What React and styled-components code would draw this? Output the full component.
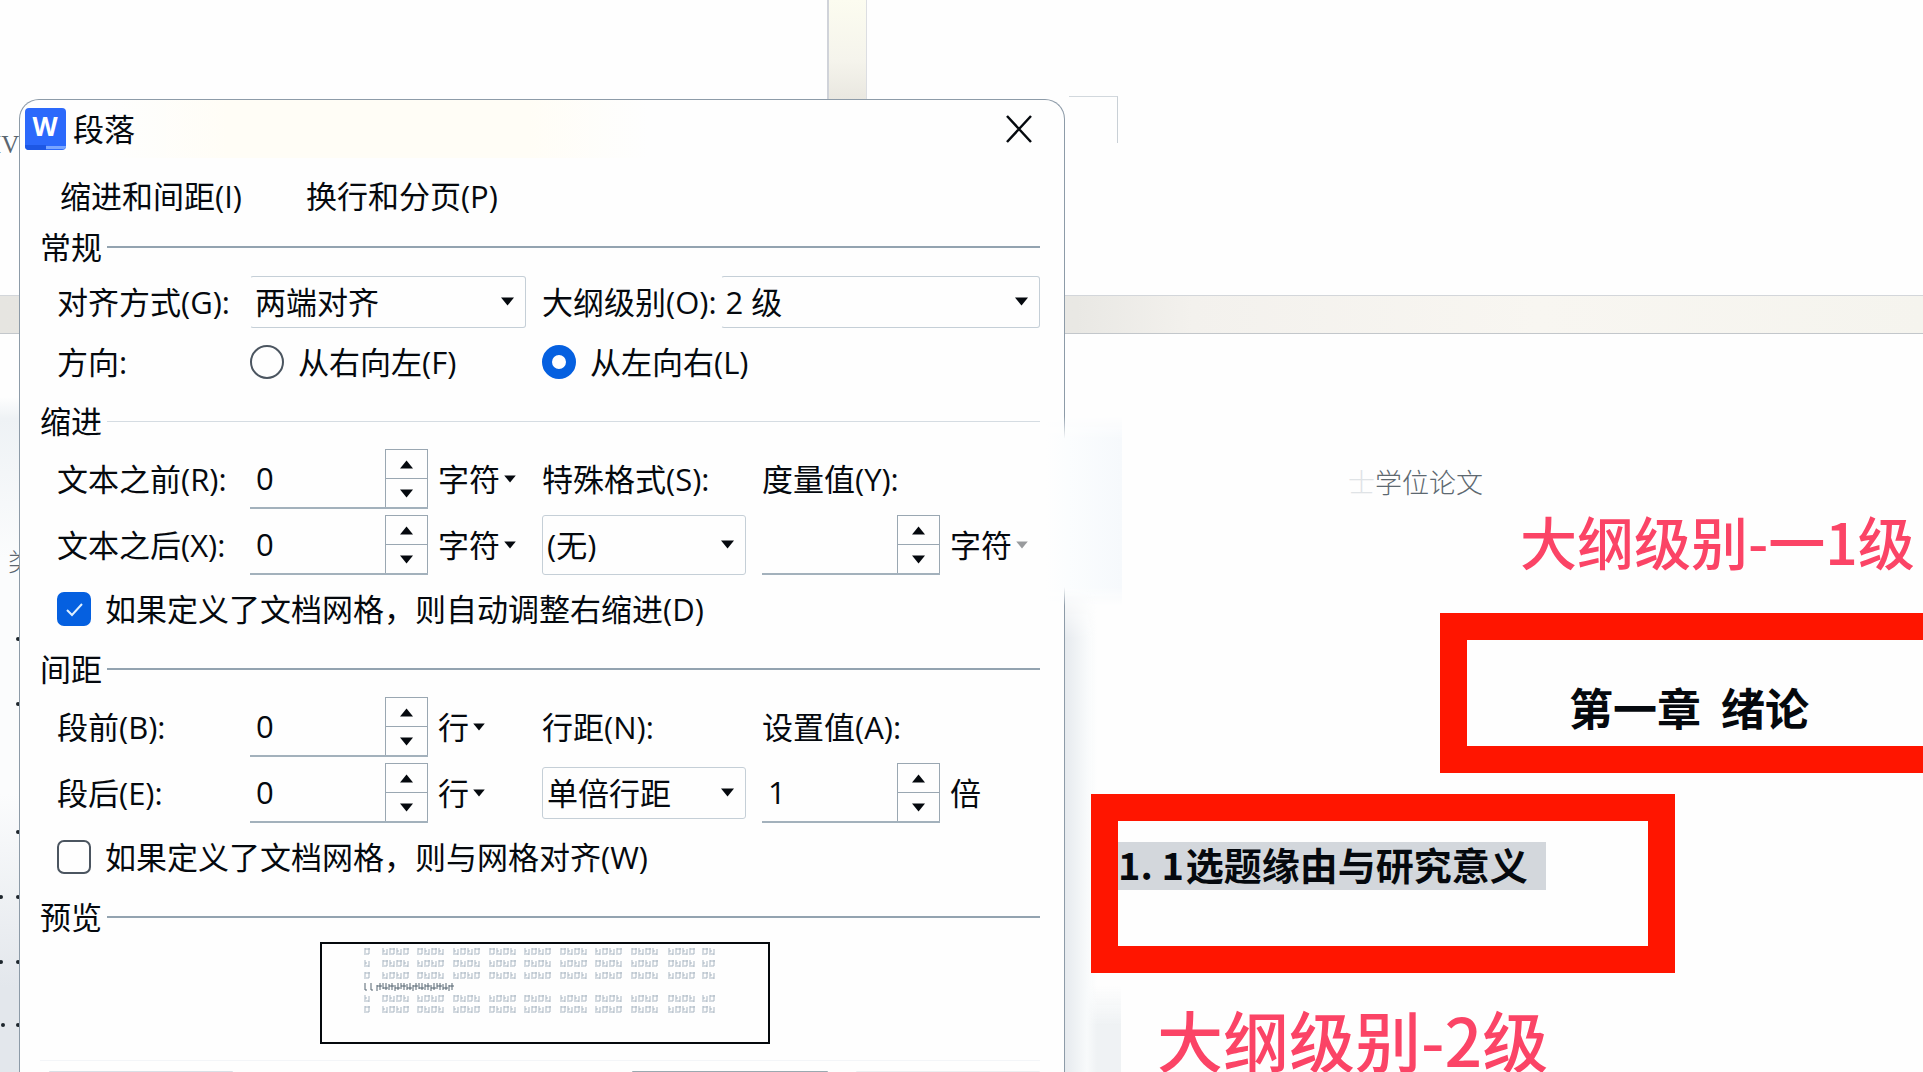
import React, { useState } from 'react';
import styled, { createGlobalStyle } from 'styled-components';

const GlobalStyle = createGlobalStyle`
    * {
        box-sizing: border-box;
    }
    body {
        margin: 0;
        overflow: hidden;
        background: #fefefe;
        color: #05090e;
        font-family: 'Open Sans', 'Noto Sans CJK SC', sans-serif;
        font-size: 31px;
        line-height: 40px;
    }
    button, input, select {
        margin: 0;
        padding: 0;
        border: 0;
        background: none;
        color: inherit;
        font: inherit;
    }
`;

const Workspace = styled.main`
    position: relative;
    display: grid;
    grid-template-columns: 19px 1046fr 858fr;
    height: 100vh;
    overflow: hidden;
`;

const PageGapRow = styled.div`
    position: absolute;
    top: 295px;
    left: 0;
    right: 0;
    height: 39px;
    border-top: 1px solid #d3d6da;
    border-bottom: 1px solid #c3c7cb;
    background: linear-gradient(90deg, #e6e5e1 0, #e9e8e4 56%, #f3f1ed 62%, #f8f6f1 80%, #f5f4ee 100%);
`;

const PageGapColumn = styled.div`
    position: absolute;
    top: 0;
    left: 43%;
    width: 40px;
    height: 100px;
    border-left: 2px solid #d0d3d9;
    border-right: 1px solid #dcdee2;
    background: linear-gradient(#fcfcf0, #f5f4ec 60%, #e9e7e0);
`;

/* left page, mostly behind the dialog */
const Gutter = styled.aside`
    position: relative;
    overflow: hidden;
    background: linear-gradient(transparent 37%, #eef2f5 39%, #fbfcfd 52%, #fbfcfd 74%, #e3e7ec 92%);
`;

const GutterText = styled.span`
    position: absolute;
    top: ${(props) => props.top};
    left: ${(props) => props.left};
    font-family: 'Liberation Serif', 'Noto Sans CJK SC', serif;
    font-size: 25px;
    font-weight: 300;
    color: #5b6670;
    white-space: nowrap;
`;

const LeaderDots = styled.svg`
    position: absolute;
    top: 620px;
    left: 0;
    width: 19px;
    height: 420px;
`;

const Dialog = styled.section`
    position: relative;
    margin-top: 99px;
    padding: 0 24px 0 20px;
    border: 1px solid #8d9ba8;
    border-bottom: 0;
    border-radius: 20px 20px 0 0;
    background: #fefefe;
`;

const EdgeFade = styled.div`
    position: absolute;
    top: 316px;
    right: -58px;
    width: 76px;
    height: 190px;
    background: linear-gradient(90deg, #fefefe, #fbfdfe 30%, #f6f9fc);
    mask-image: linear-gradient(transparent, #000 12%, #000 90%, transparent);
`;

const TitleBar = styled.header`
    display: flex;
    align-items: center;
    height: 58px;
    margin: 0 8px 2px -15px;
    background: linear-gradient(90deg, transparent 8%, #fffdf6 20%, #fffdf6 50%, transparent 62%);
`;

const Title = styled.h1`
    flex: 1;
    margin: 0 0 0 7px;
    font-size: 31px;
    font-weight: 400;
`;

const CloseButton = styled.button`
    display: flex;
    width: 26px;
    height: 28px;
`;

const TabList = styled.div`
    display: flex;
    align-items: center;
    gap: 64px;
    height: 72px;
    padding-left: 20px;
`;

const Group = styled.section`
    padding-bottom: 14px;
`;

const GroupTitle = styled.h2`
    display: flex;
    align-items: center;
    gap: 5px;
    height: 30px;
    margin: 0 0 10px;
    font-size: 31px;
    font-weight: 400;

    &::after {
        content: '';
        flex: 1;
        height: ${(props) => (props.$faint ? '1px' : '2px')};
        background: ${(props) => (props.$faint ? '#d5dce2' : '#93a3b0')};
    }
`;

const Row = styled.div`
    display: grid;
    grid-template-columns: 193px 292px 220px 1fr;
    align-items: center;
    height: ${(props) => props.$height || '66px'};
    padding-left: 17px;
    white-space: nowrap;
`;

const Wide = styled.div`
    grid-column: 3 / 5;
    display: flex;
    align-items: center;
    gap: 4px;
`;

const SelectBox = styled.div`
    position: relative;
    flex: 1;
    width: ${(props) => props.$width || 'auto'};
    height: ${(props) => props.$height || '52px'};
    border: 1px solid #c5cfd7;
    border-left-color: ${(props) => (props.$open ? 'transparent' : '#c5cfd7')};
    border-radius: 3px;

    select {
        width: 100%;
        height: 100%;
        padding-left: 4px;
        appearance: none;
    }
    svg {
        position: absolute;
        top: 50%;
        right: 11px;
        margin-top: -5px;
        pointer-events: none;
    }
`;

const SpinnerCell = styled.div`
    display: flex;
    align-items: center;
    gap: 10px;
`;

const SpinnerBox = styled.div`
    display: flex;
    width: 178px;
    height: 60px;
    border-bottom: 2px solid #a3b1bc;

    input {
        flex: 1;
        min-width: 0;
        padding-left: 6px;
    }
`;

const Steps = styled.div`
    display: flex;
    flex-direction: column;
    width: 43px;
    border: 1px solid #9aa7b2;
    border-bottom: 0;

    button {
        flex: 1;
        display: flex;
        align-items: center;
        justify-content: center;
    }
    button + button {
        border-top: 1px solid #9aa7b2;
    }
`;

const UnitButton = styled.button`
    display: flex;
    align-items: center;
    gap: 4px;

    svg {
        opacity: ${(props) => (props.$faded ? 0.4 : 1)};
    }
`;

const Choice = styled.label`
    display: flex;
    align-items: center;
    gap: 14px;

    input {
        appearance: none;
        flex: none;
        width: 34px;
        height: 34px;
        border: 2px solid #4b5560;
        border-radius: ${(props) => (props.$round ? '50%' : '7px')};
    }
    input[type='radio']:checked {
        border: 10px solid #0560e0;
    }
    input[type='checkbox']:checked {
        border-color: #0560e0;
        background: #0560e0;
    }
`;

const CheckWrap = styled.span`
    position: relative;
    display: flex;

    svg {
        position: absolute;
        top: 10px;
        left: 9px;
        pointer-events: none;
    }
`;

const Preview = styled.div`
    width: 45%;
    height: 102px;
    margin-left: 28%;
    border: 2px solid #05090d;
`;

const Footer = styled.footer`
    display: flex;
    gap: 28px;
    margin-top: 16px;
    padding: 10px 0 0 9px;
    border-top: 1px solid #f3f5f8;
`;

const FooterEdge = styled.div`
    width: ${(props) => props.width};
    height: 2px;
    border-radius: 2px;
    background: ${(props) => props.color};

    &:first-child {
        margin-right: auto;
    }
`;

const Document = styled.article`
    position: relative;
    display: flex;
    flex-direction: column;
    align-items: flex-start;
`;

const DialogShadow = styled.div`
    position: absolute;
    top: 590px;
    left: 0;
    bottom: 0;
    width: 56px;
    background: linear-gradient(90deg, #e6eaee, #f8fafb 22px, transparent 32px),
        linear-gradient(transparent 82%, #eff2f4 90%);
    mask-image: linear-gradient(transparent, #000 10%);
`;

const PageCorner = styled.div`
    width: 49px;
    height: 47px;
    margin: 96px 0 0 4px;
    border-top: 1px solid #d2d8dd;
    border-right: 1px solid #c9d0d6;
`;

const RunningHead = styled.p`
    margin: 319px 0 0 283px;
    font-family: 'Noto Sans CJK SC', sans-serif;
    font-size: 27px;
    font-weight: 300;
    color: #5d6870;

    span {
        color: #dfe3e6;
    }
`;

const Note = styled.p`
    position: relative;
    margin: ${(props) => props.$margin};
    font-family: 'Noto Sans CJK SC', sans-serif;
    font-size: ${(props) => props.$size};
    font-weight: 500;
    line-height: 70px;
    white-space: nowrap;
    color: #fb4466;
`;

const RedFrame = styled.div`
    position: relative;
    display: flex;
    align-items: ${(props) => (props.$chapter ? 'center' : 'flex-start')};
    align-self: ${(props) => (props.$chapter ? 'stretch' : 'flex-start')};
    width: ${(props) => (props.$chapter ? 'auto' : '584px')};
    height: ${(props) => (props.$chapter ? '160px' : '179px')};
    margin: ${(props) => props.$margin};
    padding: ${(props) => (props.$chapter ? '28px 0 0 102px' : '21px 0 0')};
    border: 27px solid #ff1500;
    border-right-width: ${(props) => (props.$chapter ? 0 : '27px')};
    background: #fefefe;
    font-family: 'Noto Sans CJK SC', sans-serif;
    white-space: nowrap;
`;

const Chapter = styled.h2`
    display: flex;
    gap: 20px;
    margin: 0;
    font-size: 44px;
    font-weight: 700;
`;

const Heading = styled.h3`
    display: flex;
    gap: 2px;
    margin: 0;
    padding: 0 18px 4px 0;
    font-size: 38px;
    font-weight: 700;
    line-height: 44px;
    background: #d3d7dc;
`;

const Caret = ({ up, small }) => (
    <svg width={small ? 12 : 13} height={small ? 8 : 9} viewBox="0 0 13 9" fill="currentColor" aria-hidden="true">
        <path d={up ? 'M6.5 0.5 13 8.5H0z' : 'M0 0.5h13L6.5 8.5z'} />
    </svg>
);

const AppIcon = () => (
    <svg width="41" height="42" viewBox="0 0 41 42" overflow="visible" aria-hidden="true">
        <rect width="41" height="42" rx="4" fill="#2c69fb" />
        <path d="M0 37h21v5H4a4 4 0 0 1-4-4z" fill="#1d57e4" />
        <path d="M21 38h20a3 3 0 0 1-2 3H21z" fill="#79a5ff" />
        <text x="20" y="28" textAnchor="middle" fontFamily="Open Sans" fontSize="26" fontWeight="700" fill="#fff">W</text>
    </svg>
);

const Select = ({ id, options, width, height, open }) => (
    <SelectBox $width={width} $height={height} $open={open}>
        <select id={id}>
            {options.map((option) => <option key={option}>{option}</option>)}
        </select>
        <Caret />
    </SelectBox>
);

const Spinner = ({ id, initial, unit, plain, faded }) => {
    const [value, setValue] = useState(initial);
    const step = (amount) => setValue(String(Math.max(0, Number(value) + amount)));

    return (
        <SpinnerCell>
            <SpinnerBox>
                <input id={id} value={value} onChange={(e) => setValue(e.target.value)} />
                <Steps>
                    <button type="button" aria-label="增加" onClick={() => step(1)}><Caret up /></button>
                    <button type="button" aria-label="减少" onClick={() => step(-1)}><Caret /></button>
                </Steps>
            </SpinnerBox>
            {plain ? <span>{unit}</span> : (
                <UnitButton type="button" $faded={faded}>{unit}<Caret small /></UnitButton>
            )}
        </SpinnerCell>
    );
};

const Check = ({ label, initial }) => {
    const [checked, setChecked] = useState(initial);
    return (
        <Choice>
            <CheckWrap>
                <input type="checkbox" checked={checked} onChange={() => setChecked(!checked)} />
                {checked && (
                    <svg width="17" height="15" viewBox="0 0 17 15" fill="none" stroke="#dff0ff" strokeWidth="2">
                        <path d="M1 8l5 5L16 2" />
                    </svg>
                )}
            </CheckWrap>
            {label}
        </Choice>
    );
};

const groupStarts = [0, 18, 53, 89, 125, 160, 196, 231, 267, 304, 338];

// thumbnail of the paragraph among its neighbours
const PreviewLines = () => {
    const marks = [];
    [4, 16, 28, 51, 62].forEach((y, line) => {
        groupStarts.forEach((start, group) => {
            const count = group === 0 ? 1 : group === 10 ? 2 : 4;
            for (let i = 0; i < count; i++) {
                const x = 43 + start + i * 7;
                const odd = (i + group + line) % 2;
                marks.push(`M${x} ${y}v7M${x + 4} ${y + odd}v6M${x} ${y + 1 + odd * 2}h${odd ? 2 : 5}M${x + 1} ${y + 6}h3`);
            }
        });
    });
    const current = [];
    for (let i = 0; i < 15; i++) {
        const x = 43 + i * 6;
        current.push(i < 2 ? `M${x} 39v7h2` : `M${x} ${39 + (i % 3)}v6M${x + 3} 39v7M${x} ${42 + (i % 2) * 2}h5`);
    }
    return (
        <svg width="100%" height="98" fill="none" aria-hidden="true">
            <path d={marks.join('')} stroke="#a9b6c2" />
            <path d={current.join('')} stroke="#546471" />
        </svg>
    );
};

const App = () => {
    const [direction, setDirection] = useState('L');

    return (
        <>
            <GlobalStyle />
            <Workspace>
                <PageGapRow />
                <PageGapColumn />
                <Gutter>
                    <GutterText top="125px" left="-7px">IV</GutterText>
                    <GutterText top="543px" left="8px">类</GutterText>
                    <LeaderDots fill="#1d252c">
                        {[[18, 19], [18, 84], [18, 212], [1, 277], [18, 277], [1, 342], [18, 342], [3, 405], [18, 405]].map(([x, y]) => (
                            <circle key={`${x}-${y}`} cx={x} cy={y} r="2" />
                        ))}
                    </LeaderDots>
                </Gutter>
                <Dialog aria-label="段落">
                    <EdgeFade />
                    <TitleBar>
                        <AppIcon />
                        <Title>段落</Title>
                        <CloseButton type="button" aria-label="关闭">
                            <svg width="26" height="28" viewBox="0 0 26 28" stroke="currentColor" strokeWidth="2.500">
                                <path d="M1 1l24 26M25 1L1 27" />
                            </svg>
                        </CloseButton>
                    </TitleBar>
                    <TabList role="tablist">
                        <button type="button" role="tab" aria-selected="true">缩进和间距(I)</button>
                        <button type="button" role="tab" aria-selected="false">换行和分页(P)</button>
                    </TabList>

                    <Group>
                        <GroupTitle>常规</GroupTitle>
                        <Row $height="60px">
                            <label htmlFor="align">对齐方式(G):</label>
                            <Select id="align" options={['两端对齐', '左对齐', '居中对齐']} width="276px" open />
                            <Wide>
                                <label htmlFor="outline">大纲级别(O):</label>
                                <Select id="outline" options={['2 级', '1 级', '3 级']} open />
                            </Wide>
                        </Row>
                        <Row $height="60px">
                            <span>方向:</span>
                            <Choice $round>
                                <input type="radio" name="direction" checked={direction === 'F'} onChange={() => setDirection('F')} />
                                从右向左(F)
                            </Choice>
                            <Choice $round>
                                <input type="radio" name="direction" checked={direction === 'L'} onChange={() => setDirection('L')} />
                                从左向右(L)
                            </Choice>
                        </Row>
                    </Group>

                    <Group>
                        <GroupTitle $faint>缩进</GroupTitle>
                        <Row>
                            <label htmlFor="before">文本之前(R):</label>
                            <Spinner id="before" initial="0" unit="字符" />
                            <label htmlFor="special">特殊格式(S):</label>
                            <label htmlFor="measure">度量值(Y):</label>
                        </Row>
                        <Row>
                            <label htmlFor="after">文本之后(X):</label>
                            <Spinner id="after" initial="0" unit="字符" />
                            <Select id="special" options={['(无)', '首行缩进', '悬挂缩进']} width="204px" height="60px" />
                            <Spinner id="measure" initial="" unit="字符" faded />
                        </Row>
                        <Row $height="62px">
                            <Check label="如果定义了文档网格，则自动调整右缩进(D)" initial={true} />
                        </Row>
                    </Group>

                    <Group>
                        <GroupTitle>间距</GroupTitle>
                        <Row>
                            <label htmlFor="space-before">段前(B):</label>
                            <Spinner id="space-before" initial="0" unit="行" />
                            <label htmlFor="spacing">行距(N):</label>
                            <label htmlFor="spacing-value">设置值(A):</label>
                        </Row>
                        <Row>
                            <label htmlFor="space-after">段后(E):</label>
                            <Spinner id="space-after" initial="0" unit="行" />
                            <Select id="spacing" options={['单倍行距', '1.5 倍行距', '多倍行距']} width="204px" />
                            <Spinner id="spacing-value" initial="1" unit="倍" plain />
                        </Row>
                        <Row $height="62px">
                            <Check label="如果定义了文档网格，则与网格对齐(W)" initial={false} />
                        </Row>
                    </Group>

                    <GroupTitle>预览</GroupTitle>
                    <Preview><PreviewLines /></Preview>
                    <Footer>
                        <FooterEdge width="184px" color="#d9dfe6" />
                        <FooterEdge width="196px" color="#9aa9b0" />
                        <FooterEdge width="184px" color="#eceff1" />
                    </Footer>
                </Dialog>

                <Document>
                    <DialogShadow />
                    <PageCorner />
                    <RunningHead><span>士</span>学位论文</RunningHead>
                    <Note $size="57px" $margin="3px 0 0 455px">大纲级别-一1级</Note>
                    <RedFrame $chapter $margin="38px 0 0 375px">
                        <Chapter><span>第一章</span><span>绪论</span></Chapter>
                    </RedFrame>
                    <RedFrame $margin="21px 0 0 26px">
                        <Heading><span>1. 1</span><span>选题缘由与研究意义</span></Heading>
                    </RedFrame>
                    <Note $size="66px" $margin="30px 0 0 92px">大纲级别-2级</Note>
                </Document>
            </Workspace>
        </>
    );
};

export default App;
